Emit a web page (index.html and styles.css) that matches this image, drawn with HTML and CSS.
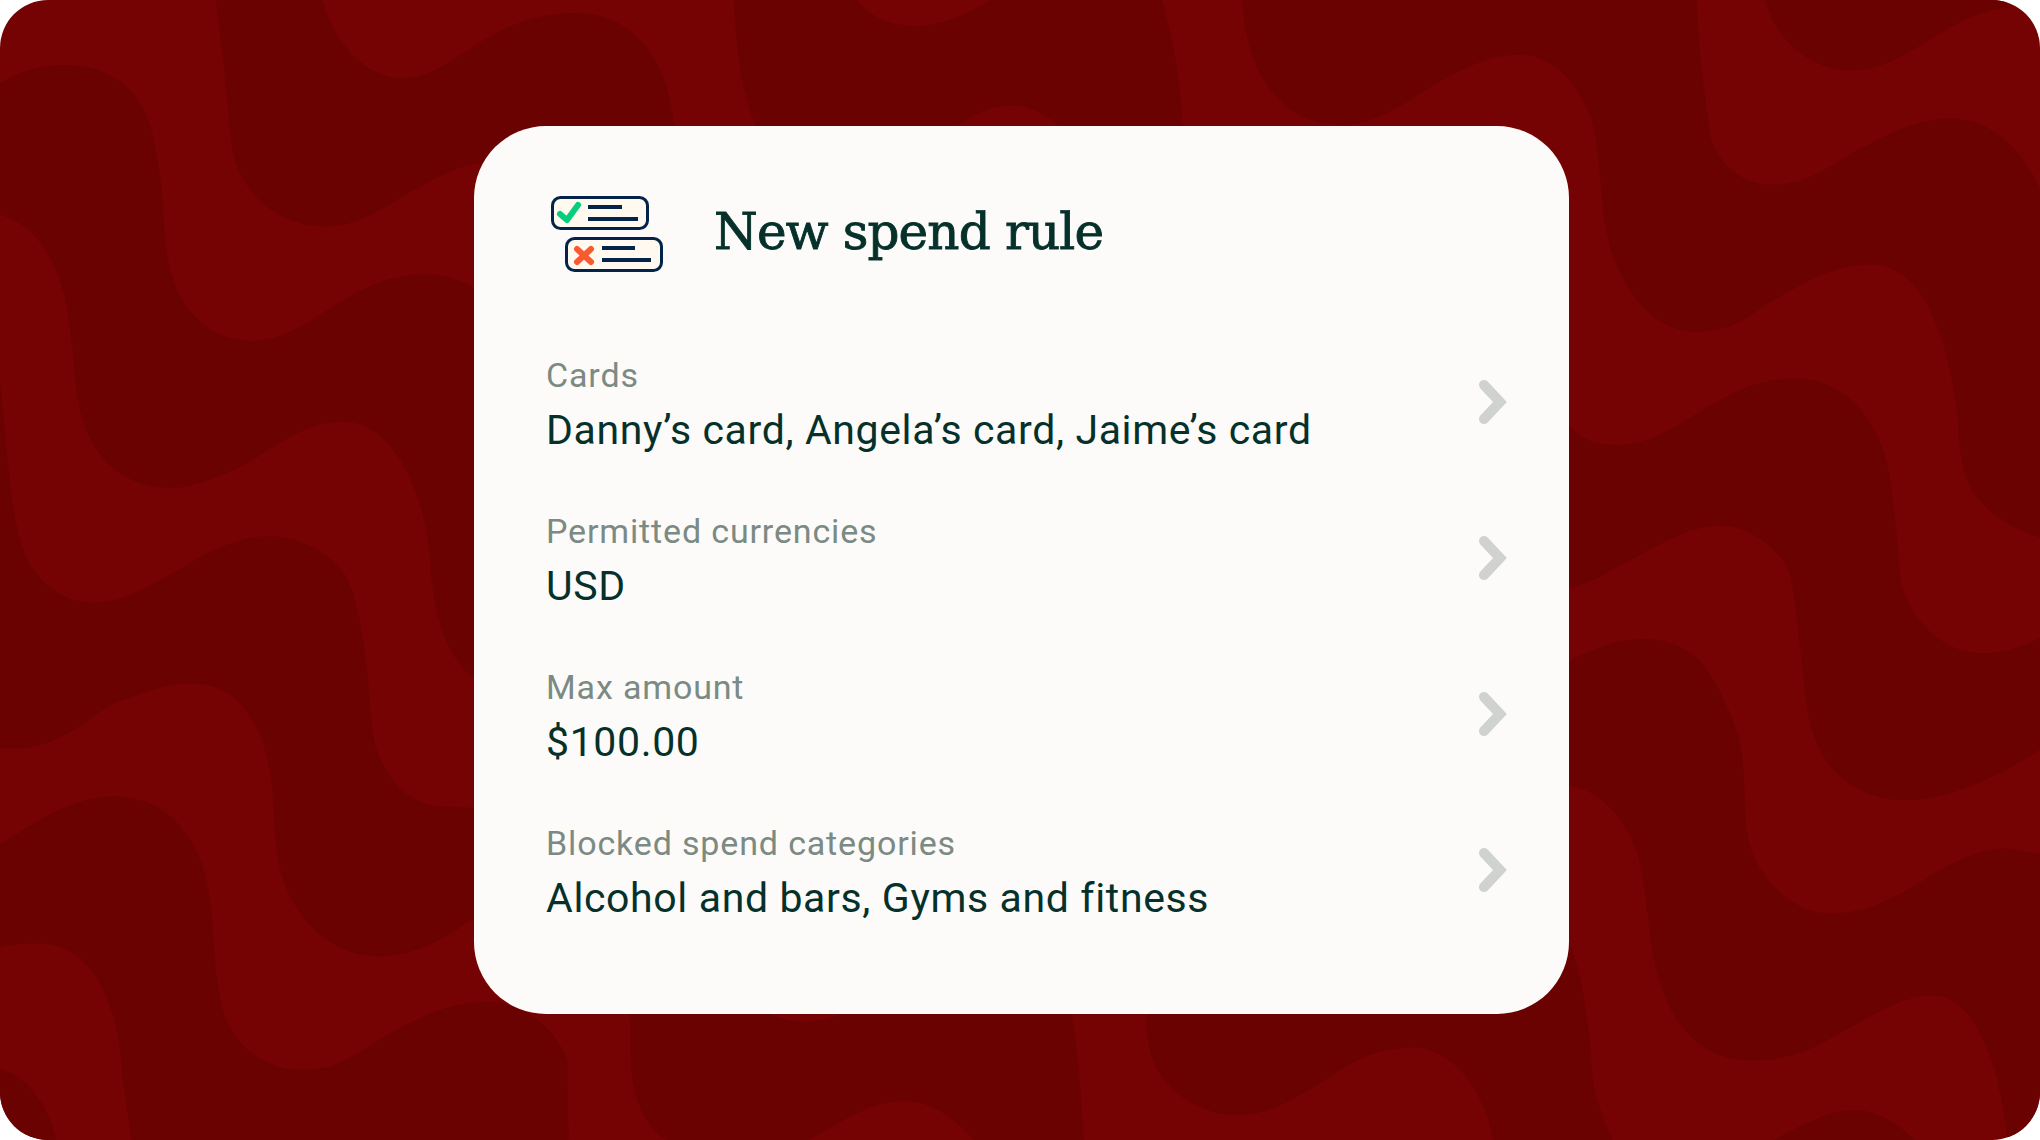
FILE: index.html
```html
<!DOCTYPE html>
<html>
  <head>
    <meta charset="UTF-8" />
    <title>New spend rule</title>
    <link rel="stylesheet" href="styles.css">
  </head>

  <body>
    <div class="stage">
      <svg class="waves" viewBox="0 0 1568 876" preserveAspectRatio="none">
        <path d="M166,0 C170,30 174,70 178,112 C184,150 215,174 250,174 C275,174 295,160 309,151 C330,140 345,130 364,126 L518,126 L518,97 C514,50 490,10 442,10 C410,10 385,22 365,35 C345,48 330,60 309,60 C280,60 255,30 248,0 Z" />
        <path d="M0,64 C15,55 30,50 51,50 C90,50 115,75 120,117 C125,140 125,165 127,182 C130,235 160,262 192,262 C220,262 240,245 254,237 C280,220 300,211 326,211 C345,211 355,215 370,225 L370,525 C345,510 335,480 331,438 C329,385 305,324 264,324 C235,324 213,342 192,355 C170,366 150,375 130,375 C95,375 66,350 60,307 C56,285 57,270 55,265 C52,215 35,175 0,165 Z" />
        <path d="M0,296 C3,320 5,350 7,363 C9,395 18,430 26,438 C38,455 55,463 72,463 C95,463 115,450 137,438 C160,423 185,412 206,412 C232,412 252,425 264,440 C275,455 282,500 285,550 C287,590 310,620 343,620 L370,621 L370,702 L364,706 C340,722 318,735 292,735 C255,735 222,705 214,662 C210,640 211,620 209,606 C205,560 185,525 147,525 C125,525 105,535 86,541 C65,555 45,572 20,575 L0,575 Z" />
        <path d="M0,649 C30,630 55,612 89,612 C125,612 155,640 161,689 C165,720 165,745 168,759 C172,800 200,822 233,822 C255,822 265,815 274,810 C310,787 340,770 374,770 C410,770 432,800 436,815 L437,876 L101,876 C97,850 95,830 94,829 C92,770 70,725 31,725 C20,725 10,725 0,728 Z" />
        <path d="M0,821 C20,826 38,850 43,876 L0,876 Z" />
        <path d="M564,0 L659,0 C670,15 688,20 704,20 C725,20 745,10 761,0 L893,0 C905,40 908,75 909,97 L909,120 L814,120 L814,97 C805,88 790,81 777,81 C762,81 748,88 735,97 L735,120 L581,120 L581,97 C570,70 566,40 564,0 Z" />
        <path d="M955,0 C957,50 980,95 1030,96 C1055,96 1075,83 1099,67 C1125,52 1145,42 1167,42 C1205,42 1222,85 1225,98 C1230,125 1230,145 1232,156 C1235,210 1265,255 1304,255 C1330,255 1345,243 1356,235 C1385,218 1410,203 1438,203 C1470,203 1495,240 1505,321 C1505,340 1508,355 1510,363 C1515,385 1540,405 1568,413 L1568,145 C1555,115 1530,91 1500,91 C1470,91 1445,107 1424,117 C1405,130 1385,142 1363,142 C1330,142 1318,115 1315,106 C1310,75 1306,40 1304,0 Z" />
        <path d="M1356,0 C1365,30 1390,54 1423,54 C1455,54 1480,30 1505,18 C1520,10 1532,7 1544,6 L1540,0 Z" />
        <path d="M1200,320 L1206,327 C1215,338 1228,342 1243,342 C1265,342 1285,330 1304,318 C1330,302 1350,291 1380,291 C1420,291 1445,325 1452,363 C1457,400 1459,420 1460,438 C1462,470 1490,502 1524,502 C1540,502 1555,497 1568,490 L1568,576 C1545,592 1500,615 1466,615 C1435,615 1400,600 1390,550 C1386,525 1385,505 1383,494 C1381,470 1378,450 1375,438 C1365,420 1345,404 1321,404 C1295,404 1265,425 1239,438 C1228,445 1215,450 1206,452 L1200,452 Z" />
        <path d="M1200,510 L1206,508 C1225,498 1243,491 1263,491 C1295,491 1310,510 1315,519 C1328,540 1335,560 1339,578 C1341,600 1341,620 1342,634 C1345,670 1375,702 1407,702 C1435,702 1455,690 1476,678 C1495,665 1520,652 1541,652 L1568,656 L1568,876 L1543,876 C1538,825 1520,765 1486,765 C1460,765 1435,783 1407,798 C1390,808 1370,815 1346,815 C1310,815 1280,790 1270,731 C1266,700 1264,680 1260,661 C1255,640 1235,607 1206,604 L1200,604 Z" />
        <path d="M1363,876 C1385,865 1405,853 1424,853 C1445,853 1460,865 1472,876 Z" />
        <path d="M484,770 L485,820 C487,850 500,870 512,876 L622,876 C650,860 670,846 696,846 C715,846 735,860 749,876 L833,876 C831,840 828,800 822,770 L650,770 L645,780 C635,784 625,785 618,785 C610,785 600,783 594,780 L590,770 Z" />
        <path d="M881,770 C881,790 882,800 884,807 C890,835 920,857 951,857 C980,857 1005,838 1029,823 C1045,812 1065,805 1085,805 C1115,805 1140,835 1148,876 L1239,876 C1228,850 1225,835 1224,829 C1222,790 1217,750 1206,725 L1140,725 Z" />
      </svg>

      <div class="card">
        <div class="card-head">
          <svg class="rule-icon" width="114" height="78" viewBox="0 0 114 78">
            <rect class="box" x="2.5" y="2.5" width="95" height="31" rx="8" />
            <path class="check" d="M10,19 L17,25 L28,10" />
            <path class="line" d="M38,12 H72 M38,24 H88" />
            <rect class="box" x="16.5" y="43.5" width="95" height="32" rx="8" />
            <path class="cross" d="M27,54 L41,67 M41,54 L27,67" />
            <path class="line" d="M52,53 H85 M52,65 H101" />
          </svg>
          <h1 class="title">New spend rule</h1>
        </div>

        <div class="row">
          <div class="row-text">
            <div class="label">Cards</div>
            <div class="value">Danny’s card, Angela’s card, Jaime’s card</div>
          </div>
          <svg class="chevron" width="28" height="44" viewBox="0 0 28 44"><path d="M5,5 L21,22 L5,39" /></svg>
        </div>
        <div class="row">
          <div class="row-text">
            <div class="label">Permitted currencies</div>
            <div class="value">USD</div>
          </div>
          <svg class="chevron" width="28" height="44" viewBox="0 0 28 44"><path d="M5,5 L21,22 L5,39" /></svg>
        </div>
        <div class="row">
          <div class="row-text">
            <div class="label">Max amount</div>
            <div class="value">$100.00</div>
          </div>
          <svg class="chevron" width="28" height="44" viewBox="0 0 28 44"><path d="M5,5 L21,22 L5,39" /></svg>
        </div>
        <div class="row">
          <div class="row-text">
            <div class="label">Blocked spend categories</div>
            <div class="value">Alcohol and bars, Gyms and fitness</div>
          </div>
          <svg class="chevron" width="28" height="44" viewBox="0 0 28 44"><path d="M5,5 L21,22 L5,39" /></svg>
        </div>
      </div>
    </div>
  </body>
</html>
```

FILE: styles.css
```css
/* page and background */
html,
body {
  margin: 0;
  background-color: #fff;
}

.stage {
  position: relative;
  box-sizing: border-box;
  width: 2040px;
  height: 1140px;
  padding: 126px 0 0 474px;
  background-color: #760303;
  border-radius: 48px;
  overflow: hidden;
  font-family: "Roboto", "Liberation Sans", sans-serif;
}

.waves {
  position: absolute;
  left: 0;
  top: 0;
  width: 2040px;
  height: 1140px;
  fill: #6a0202;
}

/* card */
.card {
  position: relative;
  box-sizing: border-box;
  width: 1095px;
  height: 888px;
  padding: 69px 62px 66px 72px;
  background-color: #fcfbf9;
  border-radius: 72px;
}

.card-head {
  display: flex;
  align-items: center;
  gap: 50px;
  height: 78px;
  margin-bottom: 51px;
  padding-left: 4px;
}

.title {
  margin: 0 0 5px 0;
  font-family: "DejaVu Serif", "Liberation Serif", serif;
  font-size: 50px;
  font-weight: 400;
  letter-spacing: -0.85px;
  color: #06302a;
  -webkit-text-stroke: 0.9px #06302a;
}

/* header icon */
.box {
  fill: #fff9f0;
  stroke: #03234b;
  stroke-width: 3;
}

.line {
  fill: none;
  stroke: #03234b;
  stroke-width: 4;
}

.check,
.cross {
  fill: none;
  stroke-width: 6;
  stroke-linecap: round;
  stroke-linejoin: round;
}

.check {
  stroke: #05cf7d;
}

.cross {
  stroke: #fa5a2f;
}

/* rows */
.row {
  display: flex;
  align-items: center;
  justify-content: space-between;
  height: 156px;
}

.row-text {
  padding-top: 6px;
}

.label {
  font-size: 34px;
  line-height: 50px;
  letter-spacing: 0.85px;
  color: #7b8a83;
}

.value {
  font-size: 41px;
  line-height: 60px;
  letter-spacing: 0.63px;
  color: #06302a;
}

.chevron {
  fill: none;
  stroke: #cfd2cf;
  stroke-width: 10;
  stroke-linecap: round;
  stroke-linejoin: miter;
}
```
